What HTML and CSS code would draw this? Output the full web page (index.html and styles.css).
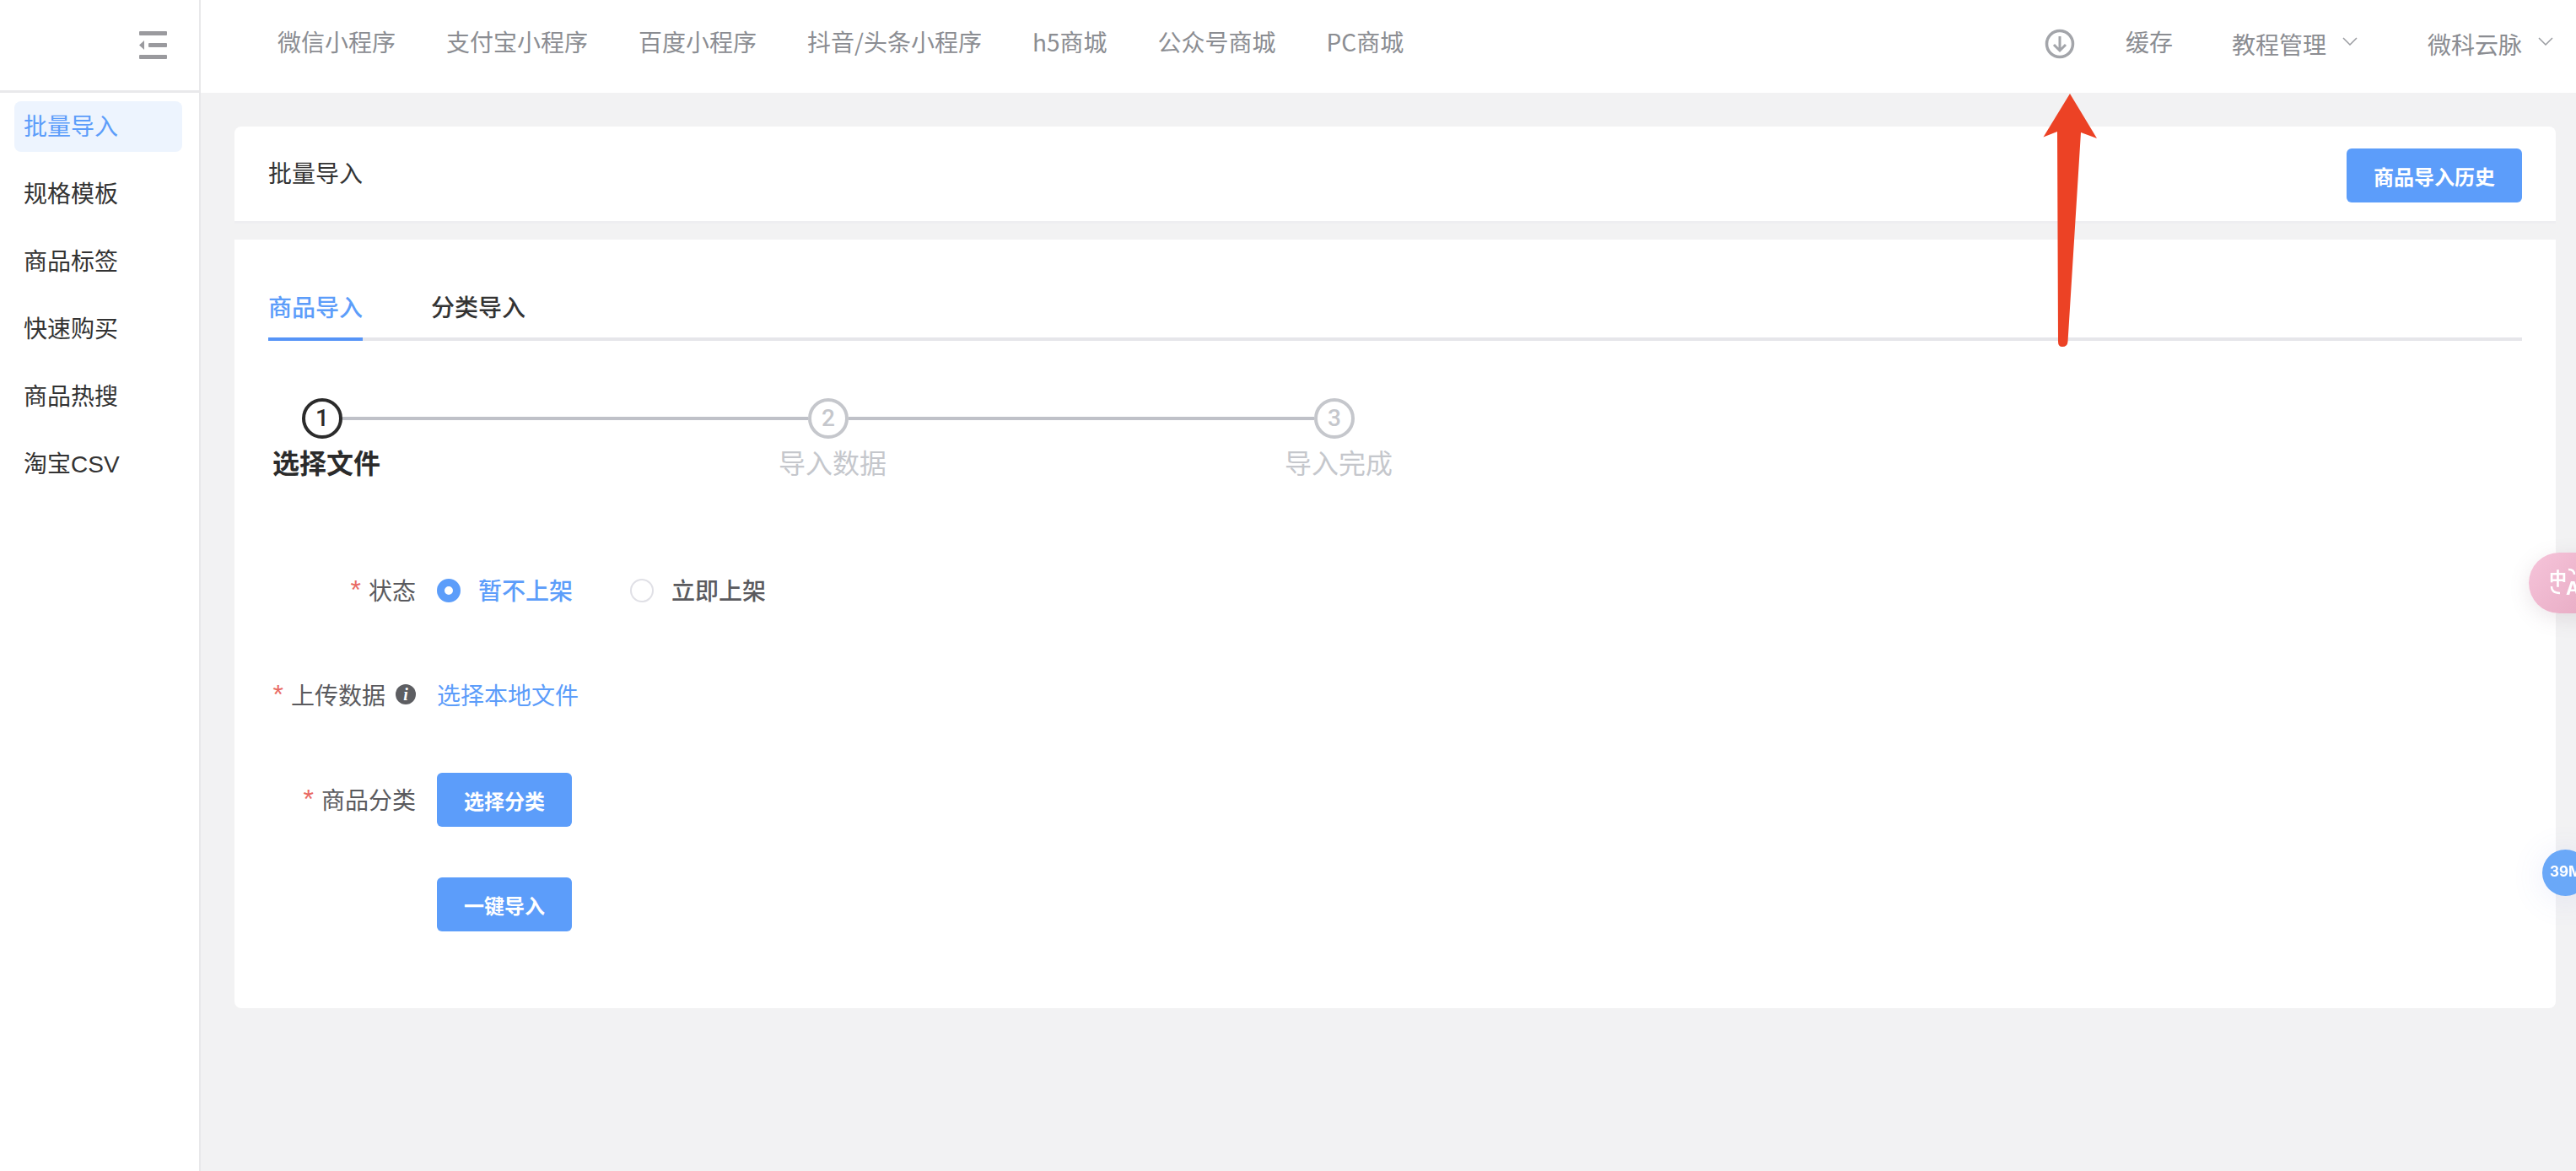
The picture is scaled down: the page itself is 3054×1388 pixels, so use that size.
FILE: index.html
```html
<!DOCTYPE html>
<html lang="zh-CN">
<head>
<meta charset="utf-8">
<title>批量导入</title>
<link rel="stylesheet" href="styles.css">
</head>
<body>
<div class="app">
  <aside class="sidebar">
    <div class="brand">
      <svg class="fold-icon" width="34" height="34" viewBox="0 0 34 34"><g fill="#9a9a9e"><rect x="0" y="0" width="33" height="5" rx="1"/><rect x="11" y="14" width="22" height="5" rx="1"/><rect x="0" y="28" width="33" height="5" rx="1"/><path d="M6 11v11l-6-5.500z"/></g></svg>
    </div>
    <nav class="side-nav">
      <a class="side-item active">批量导入</a>
      <a class="side-item">规格模板</a>
      <a class="side-item">商品标签</a>
      <a class="side-item">快速购买</a>
      <a class="side-item">商品热搜</a>
      <a class="side-item">淘宝CSV</a>
    </nav>
  </aside>
  <div class="content">
    <header class="topbar">
      <nav class="top-nav">
        <a>微信小程序</a><a>支付宝小程序</a><a>百度小程序</a><a>抖音/头条小程序</a><a>h5商城</a><a>公众号商城</a><a>PC商城</a>
      </nav>
      <div class="top-right">
        <svg class="dl-icon" width="36" height="36" viewBox="0 0 36 36" fill="none" stroke="#a3a5aa"><circle cx="18" cy="18" r="15.500" stroke-width="3.500"/><path d="M18 9v17M11 19l7 7 7-7" stroke-width="3"/></svg>
        <a class="cache">缓存</a>
        <a class="drop edu">教程管理<svg width="18" height="10" viewBox="0 0 18 10" fill="none" stroke="#9a9ca1" stroke-width="1.500"><path d="M1 1l8 8 8-8"/></svg></a>
        <a class="drop">微科云脉<svg width="18" height="10" viewBox="0 0 18 10" fill="none" stroke="#9a9ca1" stroke-width="1.500"><path d="M1 1l8 8 8-8"/></svg></a>
      </div>
    </header>
    <main class="main">
      <section class="title-card">
        <span class="title">批量导入</span>
        <button class="btn btn-history">商品导入历史</button>
      </section>
      <section class="body-card">
        <div class="tabs">
          <a class="tab active">商品导入</a>
          <a class="tab">分类导入</a>
        </div>
        <div class="steps">
          <div class="step current">
            <div class="step-head"><span class="step-num">1</span><span class="step-line"></span></div>
            <div class="step-label">选择文件</div>
          </div>
          <div class="step">
            <div class="step-head"><span class="step-num">2</span><span class="step-line"></span></div>
            <div class="step-label">导入数据</div>
          </div>
          <div class="step">
            <div class="step-head"><span class="step-num">3</span></div>
            <div class="step-label">导入完成</div>
          </div>
        </div>
        <form class="form">
          <div class="row">
            <label class="label"><i class="star">*</i>状态</label>
            <div class="radios">
              <span class="radio on"><span class="radio-dot"></span>暂不上架</span>
              <span class="radio"><span class="radio-dot"></span>立即上架</span>
            </div>
          </div>
          <div class="row">
            <label class="label"><i class="star">*</i>上传数据<span class="info">i</span></label>
            <a class="link">选择本地文件</a>
          </div>
          <div class="row">
            <label class="label"><i class="star">*</i>商品分类</label>
            <button type="button" class="btn btn-form">选择分类</button>
          </div>
          <div class="row">
            <span class="label"></span>
            <button type="button" class="btn btn-form">一键导入</button>
          </div>
        </form>
      </section>
    </main>
  </div>
</div>
<div class="float-translate">
  <svg class="tr-arcs" width="40" height="36" viewBox="0 0 40 36" fill="none" stroke="#fff" stroke-width="2.400"><path d="M23 2c4 0 7 2 7 6M3 22c0 5 3 8 10 8"/></svg>
  <span class="tr-zh">中</span><span class="tr-en">A</span>
</div>
<div class="float-size">39M</div>
<svg class="arrow" width="70" height="304" viewBox="0 0 70 304"><path d="M34 0L2.500 51.500L19 45L20 294Q20 300 25 300Q31 300 31.500 294L47 46L66 53Z" fill="#ec4225"/></svg>
</body>
</html>
```
FILE: styles.css
```css
* { box-sizing: border-box; }
html, body { margin: 0; height: 100%; overflow: hidden; }
body {
  background: #f2f2f3;
  color: #333;
  font-family: "Noto Sans CJK SC", "Liberation Sans", sans-serif;
  font-size: 28px;
}
i { font-style: normal; }
.app { display: flex; min-height: 1388px; }

.sidebar { flex: 0 0 238px; background: #fff; border-right: 2px solid #e8e8ea; }
.brand {
  height: 110px;
  border-bottom: 3px solid #e9e9eb;
  display: flex;
  justify-content: flex-end;
  align-items: center;
  padding-right: 37px;
}
.side-nav { display: flex; flex-direction: column; gap: 20px; padding: 10px 20px 0 17px; }
.side-item {
  height: 60px;
  line-height: 61px;
  padding-left: 11px;
  border-radius: 8px;
  color: #333;
  font-family: "Liberation Sans", "Noto Sans CJK SC", sans-serif;
}
.side-item.active { background: #edf4fe; color: #5c9dfa; }

.content { flex: 1; min-width: 0; }
.topbar {
  height: 110px;
  background: #fff;
  display: flex;
  align-items: center;
  padding: 0 27px 12px 91px;
  color: #8b8d92;
}
.top-nav { display: flex; gap: 60px; }
.top-right { margin-left: auto; display: flex; align-items: center; }
.dl-icon { margin-top: 6px; }
.cache { margin-left: 60px; }
.drop { display: flex; align-items: center; gap: 19px; margin-top: 6px; }
.drop svg { margin-top: -6px; }
.edu { margin: 6px 83px 0 70px; }

.main { padding: 40px 24px 0 40px; }
.title-card {
  height: 115px;
  background: #fff;
  border-radius: 8px 8px 0 0;
  border-bottom: 3px solid #eeeef1;
  display: flex;
  justify-content: space-between;
  align-items: center;
  padding: 4px 40px 0;
}
.title { color: #333; margin-bottom: 8px; }
.btn {
  border: 0;
  background: #5c9dfa;
  color: #fff;
  height: 64px;
  border-radius: 6px;
  font: 700 24px "Noto Sans CJK SC", "Liberation Sans", sans-serif;
  padding: 0;
}
.btn-history { width: 208px; }
.btn-form { width: 160px; }

.body-card {
  margin-top: 19px;
  background: #fff;
  border-radius: 0 0 8px 8px;
  padding: 60px 40px 91px;
}
.tabs { display: flex; gap: 81px; border-bottom: 4px solid #e6e6ea; }
.tab { line-height: 38px; padding-bottom: 18px; margin-bottom: -4px; border-bottom: 4px solid transparent; font-weight: 500; height: 60px; }
.tab.active { color: #5c9dfa; border-bottom-color: #5694f7; }

.steps { display: flex; margin: 68px 0 0 5px; }
.step { flex: 0 0 600px; color: #c5c7cc; }
.step-head { display: flex; align-items: center; padding-left: 35px; }
.step-num {
  flex: 0 0 48px;
  height: 48px;
  border: 4px solid #c5c7cc;
  border-radius: 50%;
  display: flex;
  align-items: center;
  justify-content: center;
  font: 500 28px/1 "Roboto", "Liberation Sans", sans-serif;
}
.step-line { flex: 1; height: 4px; background: #bfc1c8; margin-right: -35px; }
.step-label { font-size: 32px; line-height: 44px; margin-top: 5px; }
.step.current { color: #2b2b2b; }
.step.current .step-num { border-color: #2b2b2b; }
.step.current .step-label { font-weight: 700; }

.form { display: flex; flex-direction: column; gap: 60px; margin-top: 99px; }
.row { display: flex; align-items: center; height: 64px; gap: 25px; }
.label { flex: 0 0 175px; display: flex; justify-content: flex-end; align-items: center; color: #5a5a5e; padding-bottom: 3px; }
.star { color: #e96a63; margin-right: 9px; font: 32px/28px "Liberation Sans", sans-serif; }
.info {
  flex: 0 0 24px;
  height: 24px;
  margin-left: 12px;
  border-radius: 50%;
  background: #5d5e62;
  color: #fff;
  font: italic 700 20px/24px "Liberation Serif", serif;
  text-align: center;
}
.radios { display: flex; gap: 68px; padding-bottom: 3px; }
.radio { display: flex; align-items: center; gap: 21px; color: #5a5a5e; font-weight: 500; }
.radio.on { color: #5c9dfa; }
.radio-dot { width: 28px; height: 28px; margin-top: 2px; border-radius: 50%; border: 2px solid #e0e0e6; }
.radio.on .radio-dot { border: 9px solid #5c9dfa; background: #fff; }
.link { color: #5c9dfa; padding-bottom: 3px; }

.float-translate {
  position: fixed;
  left: 2998px;
  top: 655px;
  width: 120px;
  height: 72px;
  border-radius: 36px;
  background: linear-gradient(135deg, #f6c4da, #e3a4bd);
  box-shadow: 0 6px 24px rgba(120, 90, 110, 0.15);
  color: #fff;
}
.tr-arcs { position: absolute; left: 24px; top: 18px; }
.tr-zh { position: absolute; left: 24px; top: 18px; font: 700 21px/22px "Noto Sans CJK SC", sans-serif; }
.tr-en { position: absolute; left: 44px; top: 32px; font: 700 22px/20px "Inter", sans-serif; }
.float-size {
  position: fixed;
  left: 3014px;
  top: 1007px;
  width: 55px;
  height: 55px;
  border-radius: 50%;
  background: #6aa8f8;
  box-shadow: 0 4px 40px rgba(90, 110, 220, 0.12);
  color: #fff;
  font: 700 17px/53px "Inter", sans-serif;
  padding-left: 9px;
  white-space: nowrap;
}
.arrow { position: fixed; left: 2420px; top: 111px; }
```
